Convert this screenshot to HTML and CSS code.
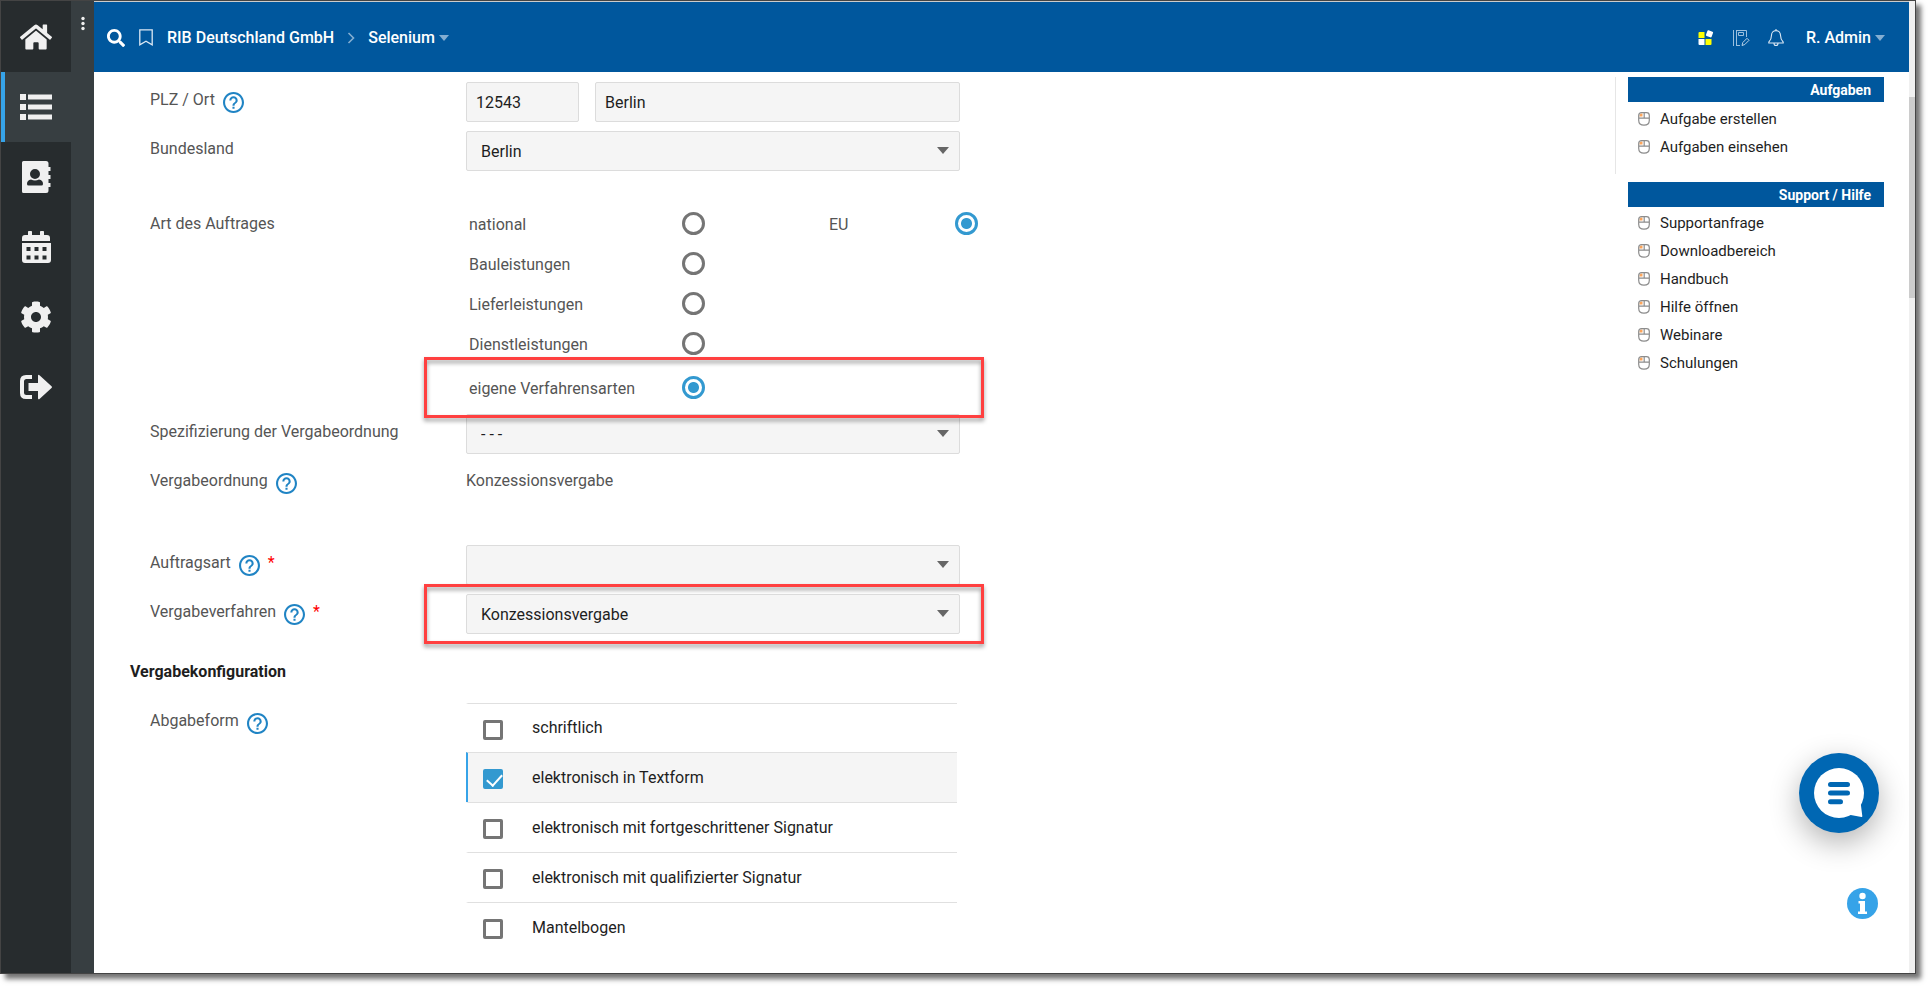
FILE: index.html
```html
<!DOCTYPE html>
<html lang="de">
<head>
<meta charset="utf-8">
<title>Selenium – RIB Deutschland GmbH</title>
<link rel="stylesheet" href="styles.css">
</head>
<body>
<svg class="defs" aria-hidden="true">
  <symbol id="help" viewBox="2 2 20 20"><path d="M11 18h2v-2h-2v2zm1-16C6.480 2 2 6.480 2 12s4.480 10 10 10 10-4.480 10-10S17.520 2 12 2zm0 18c-4.410 0-8-3.590-8-8s3.590-8 8-8 8 3.590 8 8-3.590 8-8 8zm0-14c-2.210 0-4 1.790-4 4h2c0-1.100.9-2 2-2s2 .9 2 2c0 2-3 1.750-3 5h2c0-2.250 3-2.500 3-5 0-2.210-1.790-4-4-4z"/></symbol>
  <symbol id="mouse" viewBox="0 0 12 14"><path d="M1.500 4.500V3.500Q1.500 1.500 3.500 1.500H4.500v3z" fill="#fba55c"/><path d="M3.500.7h5Q11.300.7 11.300 3.500v4.700q0 5-5.300 5t-5.300-5V3.500Q.7.700 3.500.7zM.7 6.200h10.600M6.200.7v5.500" fill="none" stroke="#8c8c8c" stroke-width="1.200"/></symbol>
</svg>
<div class="window">
  <nav class="sidebar">
    <a class="nav-item" href="#" aria-label="Start"><svg class="nav-icon" viewBox="0 0 576 512"><path d="M280.370 148.260L96 300.110V464a16 16 0 0 0 16 16l112.060-.29a16 16 0 0 0 15.920-16V368a16 16 0 0 1 16-16h64a16 16 0 0 1 16 16v95.640a16 16 0 0 0 16 16.050L464 480a16 16 0 0 0 16-16V300L295.670 148.260a12.190 12.190 0 0 0-15.300 0zM571.600 251.470L488 182.560V44.050a12 12 0 0 0-12-12h-56a12 12 0 0 0-12 12v72.610L318.470 43a48 48 0 0 0-61 0L4.340 251.470a12 12 0 0 0-1.600 16.900l25.500 31A12 12 0 0 0 45.150 301l235.220-193.740a12.190 12.190 0 0 1 15.300 0L530.900 301a12 12 0 0 0 16.900-1.600l25.500-31a12 12 0 0 0-1.700-16.930z"/></svg></a>
    <a class="nav-item nav-item--active" href="#" aria-label="Liste"><svg class="nav-icon" viewBox="0 0 32 32"><path d="M0 3h6v6H0zM0 13h6v6H0zM0 23h6v6H0zM8 3.500h24v5H8zM8 13.500h24v5H8zM8 23.500h24v5H8z"/></svg></a>
    <a class="nav-item" href="#" aria-label="Adressbuch"><svg class="nav-icon" viewBox="0 0 32 32"><path fill-rule="evenodd" d="M3.500 0H26q2.500 0 2.500 2.500V6h2v4h-2v4h2v4h-2v4h2v4h-2v3.500Q28.500 32 26 32H3.500Q2 32 2 30.500v-29Q2 0 3.500 0zM15 8a5 5 0 1 0 0 10 5 5 0 0 0 0-10zM11 18.500q-4 .8-4 4.500 0 1.500 1.500 1.500h13q1.500 0 1.500-1.500 0-3.700-4-4.500-4 2-8 0z"/></svg></a>
    <a class="nav-item" href="#" aria-label="Kalender"><svg class="nav-icon" viewBox="0 0 32 32"><path fill-rule="evenodd" d="M2 10V7q0-3 3-3h3V.8Q8 0 8.800 0h2.400q.8 0 .8.800V4h8V.8q0-.8.8-.8h2.400q.8 0 .8.800V4h3q3 0 3 3v3zM2 12h29v17q0 3-3 3H5q-3 0-3-3zm4.500 4v4h4v-4zm8 0v4h4v-4zm8 0v4h4v-4zm-16 8.500v4h4v-4zm8 0v4h4v-4zm8 0v4h4v-4z"/></svg></a>
    <a class="nav-item" href="#" aria-label="Einstellungen"><svg class="nav-icon" viewBox="0 0 512 512"><path d="M487.400 315.700l-42.600-24.600c4.300-23.200 4.300-47 0-70.200l42.600-24.600c4.900-2.800 7.100-8.600 5.500-14-11.100-35.600-30-67.800-54.700-94.600-3.800-4.100-10-5.100-14.800-2.300L380.800 110c-17.900-15.400-38.500-27.300-60.800-35.100V25.800c0-5.600-3.900-10.500-9.400-11.700-36.700-8.200-74.300-7.800-109.200 0-5.500 1.200-9.400 6.100-9.400 11.700V75c-22.200 7.900-42.800 19.800-60.800 35.100L88.700 85.500c-4.900-2.800-11-1.900-14.800 2.300-24.700 26.700-43.600 58.900-54.700 94.600-1.700 5.400.6 11.200 5.500 14L67.300 221c-4.300 23.200-4.300 47 0 70.200l-42.600 24.600c-4.900 2.800-7.100 8.600-5.500 14 11.100 35.600 30 67.800 54.700 94.600 3.800 4.100 10 5.100 14.800 2.300l42.600-24.600c17.900 15.400 38.500 27.300 60.800 35.100v49.200c0 5.600 3.900 10.500 9.400 11.700 36.700 8.200 74.300 7.800 109.200 0 5.500-1.200 9.400-6.100 9.400-11.700v-49.200c22.200-7.900 42.800-19.800 60.800-35.100l42.600 24.600c4.900 2.800 11 1.900 14.800-2.300 24.700-26.700 43.600-58.900 54.700-94.600 1.500-5.500-.7-11.300-5.600-14.100zM256 336c-44.100 0-80-35.900-80-80s35.900-80 80-80 80 35.900 80 80-35.900 80-80 80z"/></svg></a>
    <a class="nav-item" href="#" aria-label="Abmelden"><svg class="nav-icon" viewBox="0 0 32 32"><path d="M12 4v4H6.500Q4 8 4 10.500v11Q4 24 6.500 24H12v4H6q-6 0-6-6V10q0-6 6-6zM8.500 12H18V5q0-2 1.500-.7l12 11q1 .8 0 1.600l-12 11Q18 29 18 27v-7H8.500z"/></svg></a>
  </nav>
  <div class="rail">
    <button class="rail-menu" type="button" aria-label="Menü"><svg viewBox="0 0 4 16" width="4" height="16"><circle cx="2" cy="2.500" r="1.700"/><circle cx="2" cy="7.500" r="1.700"/><circle cx="2" cy="12.500" r="1.700"/></svg></button>
  </div>
  <div class="page">
    <header class="topbar">
      <button class="icon-button" type="button" aria-label="Suche"><svg width="18" height="18" viewBox="0 0 512 512"><path fill="#fff" d="M505 442.700L405.300 343c-4.500-4.500-10.600-7-17-7H372c27.600-35.300 44-79.700 44-128C416 93.100 322.900 0 208 0S0 93.100 0 208s93.100 208 208 208c48.300 0 92.700-16.400 128-44v16.300c0 6.400 2.500 12.500 7 17l99.700 99.700c9.400 9.400 24.600 9.400 33.900 0l28.300-28.300c9.400-9.400 9.400-24.600.1-34zM208 336c-70.700 0-128-57.200-128-128 0-70.700 57.200-128 128-128 70.700 0 128 57.200 128 128 0 70.700-57.200 128-128 128z"/></svg></button>
      <button class="icon-button" type="button" aria-label="Lesezeichen"><svg width="14" height="17" viewBox="0 0 14 17"><path d="M.8.800h12.400v15L7 12.200.8 15.800z" fill="none" stroke="#dbe8f4" stroke-width="1.300"/></svg></button>
      <nav class="crumbs">
        <a class="crumb" href="#">RIB Deutschland GmbH</a>
        <svg width="8" height="12" viewBox="0 0 8 12"><path d="M1.500 1l5 5-5 5" fill="none" stroke="#84aed2" stroke-width="1.600"/></svg>
        <a class="crumb crumb--menu" href="#">Selenium</a>
      </nav>
      <div class="tools">
        <button class="icon-button" type="button" aria-label="Apps"><svg width="16" height="16" viewBox="0 0 16 16"><path d="M.5 3q0-1 1-1h5v6h-6z" fill="#ff0"/><path d="M.5 9h6v6h-5q-1 0-1-1z" fill="#fff"/><path d="M7.500 9h6v5q0 1-1 1h-5z" fill="#ff0"/><rect x="8.500" y=".8" width="6" height="6" rx="1" transform="rotate(20 11.500 3.800)" fill="#fff"/></svg></button>
        <button class="icon-button" type="button" aria-label="Notizen"><svg width="18" height="18" viewBox="0 0 18 18"><path d="M1.500 1v16M4.500 17V1M4 1.500h10.500V8M4 16.500h4M6.500 3.500h5v3h-5z" fill="none" stroke="#9cc0de" stroke-width="1"/><path d="M10 16.500l.8-3 4.200-4.200 2 2-4.200 4.200z" fill="none" stroke="#b9d2e8" stroke-width="1"/></svg></button>
        <button class="icon-button" type="button" aria-label="Meldungen"><svg width="16" height="18" viewBox="0 0 16 18"><path d="M8 1.600c-3 0-4.500 2.200-4.500 4.700 0 4-1.300 5.200-2.700 6.700v1h14.400v-1c-1.400-1.500-2.700-2.700-2.700-6.700 0-2.500-1.500-4.700-4.500-4.700zM8 0v1.600M6 14.200q0 2.300 2 2.300t2-2.300" fill="none" stroke="#dbe8f4" stroke-width="1.100"/></svg></button>
        <button class="user" type="button">R. Admin</button>
      </div>
    </header>
    <div class="content">
      <form class="form">
        <div class="row">
          <div class="label"><label for="plz">PLZ / Ort</label><button class="help" type="button" aria-label="Hilfe"><svg><use href="#help"/></svg></button></div>
          <div class="field place"><input class="input" id="plz" value="12543"><input class="input" aria-label="Ort" value="Berlin"></div>
        </div>
        <div class="row">
          <div class="label"><label for="land">Bundesland</label></div>
          <div class="field select"><select id="land"><option>Berlin</option></select></div>
        </div>
        <div class="row row--art">
          <div class="label">Art des Auftrages</div>
          <div class="choices">
            <div class="choice">
              <label for="national">national</label><input class="radio" type="radio" name="region" id="national">
              <label class="second" for="eu">EU</label><input class="radio" type="radio" name="region" id="eu" checked>
            </div>
            <div class="choice"><label for="bau">Bauleistungen</label><input class="radio" type="radio" name="art" id="bau"></div>
            <div class="choice"><label for="liefer">Lieferleistungen</label><input class="radio" type="radio" name="art" id="liefer"></div>
            <div class="choice"><label for="dienst">Dienstleistungen</label><input class="radio" type="radio" name="art" id="dienst"></div>
            <div class="choice choice--own"><label for="eigene">eigene Verfahrensarten</label><input class="radio" type="radio" name="art" id="eigene" checked><span class="marker marker--choice"></span></div>
          </div>
        </div>
        <div class="row">
          <div class="label"><label for="spez">Spezifizierung der Vergabeordnung</label></div>
          <div class="field select"><select id="spez"><option>- - -</option></select></div>
        </div>
        <div class="row row--value">
          <div class="label">Vergabeordnung<button class="help" type="button" aria-label="Hilfe"><svg><use href="#help"/></svg></button></div>
          <div class="value">Konzessionsvergabe</div>
        </div>
        <div class="row">
          <div class="label"><label for="auftragsart">Auftragsart</label><button class="help" type="button" aria-label="Hilfe"><svg><use href="#help"/></svg></button><span class="required">*</span></div>
          <div class="field select"><select id="auftragsart"><option></option></select></div>
        </div>
        <div class="row">
          <div class="label"><label for="verfahren">Vergabeverfahren</label><button class="help" type="button" aria-label="Hilfe"><svg><use href="#help"/></svg></button><span class="required">*</span></div>
          <div class="field select"><select id="verfahren"><option>Konzessionsvergabe</option></select><span class="marker marker--select"></span></div>
        </div>
        <h2 class="section">Vergabekonfiguration</h2>
        <div class="row">
          <div class="label">Abgabeform<button class="help" type="button" aria-label="Hilfe"><svg><use href="#help"/></svg></button></div>
          <div class="options">
            <label class="option"><input class="check" type="checkbox">schriftlich</label>
            <label class="option option--on"><input class="check" type="checkbox" checked>elektronisch in Textform</label>
            <label class="option"><input class="check" type="checkbox">elektronisch mit fortgeschrittener Signatur</label>
            <label class="option"><input class="check" type="checkbox">elektronisch mit qualifizierter Signatur</label>
            <label class="option"><input class="check" type="checkbox">Mantelbogen</label>
          </div>
        </div>
      </form>
      <aside class="side">
        <section class="panel">
          <h3 class="panel-title">Aufgaben</h3>
          <a class="panel-link" href="#"><svg><use href="#mouse"/></svg>Aufgabe erstellen</a>
          <a class="panel-link" href="#"><svg><use href="#mouse"/></svg>Aufgaben einsehen</a>
        </section>
        <section class="panel">
          <h3 class="panel-title">Support / Hilfe</h3>
          <a class="panel-link" href="#"><svg><use href="#mouse"/></svg>Supportanfrage</a>
          <a class="panel-link" href="#"><svg><use href="#mouse"/></svg>Downloadbereich</a>
          <a class="panel-link" href="#"><svg><use href="#mouse"/></svg>Handbuch</a>
          <a class="panel-link" href="#"><svg><use href="#mouse"/></svg>Hilfe öffnen</a>
          <a class="panel-link" href="#"><svg><use href="#mouse"/></svg>Webinare</a>
          <a class="panel-link" href="#"><svg><use href="#mouse"/></svg>Schulungen</a>
        </section>
      </aside>
    </div>
    <button class="chat" type="button" aria-label="Chat"><svg width="50" height="50" viewBox="0 0 50 50"><circle cx="25" cy="25" r="25" fill="#fff"/><path d="M34 46.500l13.500 2.400q1 .1.800-.9L46.800 36z" fill="#fff"/><path d="M16.500 16.500h17M16.500 25h17M16.500 33.700h10" stroke="#0067b3" stroke-width="5" stroke-linecap="round"/></svg></button>
    <button class="info" type="button" aria-label="Info"><svg width="31" height="31" viewBox="0 0 31 31"><circle cx="15.500" cy="15.500" r="15.500" fill="#36a3e8"/><circle cx="15.500" cy="8" r="3.200" fill="#fff"/><path d="M11.500 13H18v10.500h2V26h-9v-2.500h2v-8h-1.500z" fill="#fff"/></svg></button>
  </div>
  <div class="scrollbar"><div class="thumb"></div></div>
</div>
</body>
</html>
```
FILE: styles.css
```css
* {
  box-sizing: border-box;
}

body {
  margin: 0;
  height: 100vh;
  padding: 0 15px 15px 0;
  background: #fff;
  color: #1e1e1e;
  font: 16px/20px Roboto, "Liberation Sans", sans-serif;
}

button,
input,
select {
  font: inherit;
  color: inherit;
}

button {
  padding: 0;
  border: 0;
  background: none;
  cursor: pointer;
}

a {
  color: inherit;
  text-decoration: none;
}

svg {
  display: block;
}

.defs {
  position: absolute;
  width: 0;
  height: 0;
}

.window {
  display: flex;
  height: 100%;
  border: 1px solid #444;
  box-shadow: 5px 5px 5px rgba(0, 0, 0, 0.55);
  background: #fff;
}

/* Navigation */

.sidebar {
  flex: none;
  width: 70px;
  padding-top: 1px;
  background: #272c2e;
}

.nav-item {
  display: flex;
  align-items: center;
  justify-content: center;
  height: 70px;
  border-left: 4px solid transparent;
  padding-right: 4px;
}

.nav-item--active {
  border-left-color: #36a3e8;
  background: #373e41;
}

.nav-icon {
  width: 32px;
  height: 32px;
  fill: #f0f0f0;
}

.rail {
  flex: none;
  width: 23px;
  padding: 15px 0 0 10px;
  background: #373e41;
}

.rail-menu {
  fill: #f0f0f0;
}

.page {
  position: relative;
  flex: 1;
  min-width: 0;
  display: flex;
  flex-direction: column;
  border-top: 1px solid #ccc;
}

/* Header */

.topbar {
  flex: none;
  display: flex;
  align-items: center;
  gap: 14px;
  height: 70px;
  padding: 1px 24px 0 13px;
  background: #00579d;
  color: #fff;
  font-weight: 500;
}

.crumbs {
  display: flex;
  align-items: center;
  gap: 13px;
}

.crumb--menu::after,
.user::after {
  content: "";
  display: inline-block;
  margin-left: 4px;
  border: 5px solid transparent;
  border-top: 6px solid #84aed2;
  border-bottom: 0;
  vertical-align: 2px;
}

.tools {
  display: flex;
  align-items: center;
  gap: 18px;
  margin-left: auto;
}

.user {
  margin-left: 4px;
  font-weight: 500;
}

/* Form */

.content {
  flex: 1;
  min-height: 0;
  display: flex;
  justify-content: space-between;
  gap: 24px;
  overflow: hidden;
}

.form {
  flex: 0 1 900px;
  min-width: 0;
  padding: 10px 0 0 56px;
  color: #555;
}

.row {
  display: grid;
  grid-template-columns: 316px minmax(0, 1fr);
  margin-bottom: 9px;
}

.row--art {
  margin: 32px 0 3px;
}

.row--value {
  margin-bottom: 46px;
}

.label {
  display: flex;
  align-items: center;
  height: 36px;
}

.row--art .label {
  height: 42px;
}

.value {
  line-height: 36px;
}

.help {
  margin: 4px 0 0 8px;
}

.help svg {
  width: 21px;
  height: 21px;
  fill: #2084c4;
}

.required {
  margin-left: 8px;
  color: #f00;
}

.field {
  position: relative;
  max-width: 494px;
}

.place {
  display: grid;
  grid-template-columns: 113px minmax(0, 1fr);
  gap: 16px;
}

.input,
.select select {
  width: 100%;
  height: 40px;
  padding: 0 9px;
  border: 1px solid #dcdcdc;
  border-radius: 2px;
  background: #f5f5f5;
  color: #1e1e1e;
}

.select select {
  display: block;
  appearance: none;
  padding: 1px 14px 0;
}

.select::after {
  content: "";
  position: absolute;
  top: 16px;
  right: 11px;
  border: 6px solid transparent;
  border-top: 7px solid #666;
  border-bottom: 0;
  pointer-events: none;
}

.choice {
  position: relative;
  display: grid;
  grid-template-columns: 213px 23px 124px 126px 23px;
  align-items: center;
  height: 40px;
  padding-left: 3px;
}

.choice label {
  padding-top: 3px;
}

.choice--own {
  height: 48px;
}

.choice .second {
  grid-column: 4;
}

.radio,
.check {
  appearance: none;
  margin: 0;
  border: 3px solid #757575;
  background: #fff;
}

.radio {
  width: 23px;
  height: 23px;
  border-radius: 50%;
}

.radio:checked {
  border-color: #3399d0;
  background: radial-gradient(circle, #3399d0 5px, #fff 6px);
}

.marker {
  position: absolute;
  z-index: 1;
  border: 3px solid #ff4040;
  filter: drop-shadow(0 3px 2px rgba(0, 0, 0, 0.4));
  pointer-events: none;
}

.marker--choice {
  inset: -6px auto -7px -42px;
  width: 560px;
}

.marker--select {
  inset: -10px -24px -10px -42px;
}

.section {
  margin: 27px 0 21px -20px;
  font-size: 16px;
  line-height: 21px;
  font-weight: 700;
  color: #1e1e1e;
}

.options {
  max-width: 491px;
  color: #1e1e1e;
}

.option {
  display: flex;
  align-items: center;
  gap: 29px;
  height: 50px;
  padding-left: 15px;
  border-top: 1px solid #e0e0e0;
  border-left: 2px solid transparent;
}

.option:first-child {
  height: 49px;
}

.option--on {
  border-left-color: #36a3e8;
  background: #f5f5f5;
}

.check {
  width: 20px;
  height: 20px;
  margin-top: 3px;
  border-radius: 2px;
}

.check:checked {
  display: flex;
  border-color: #3399d0;
  background: #3399d0;
}

.check:checked::after {
  content: "";
  width: 7px;
  height: 13px;
  margin: -1px 0 0 4px;
  border: solid #fff;
  border-width: 0 2px 2px 0;
  rotate: 42deg;
}

/* Side panels */

.side {
  flex: none;
  width: 294px;
  padding: 5px 25px 0 0;
  font-size: 15px;
}

.panel {
  padding-left: 12px;
  margin-bottom: 8px;
  border-left: 1px solid transparent;
}

.panel:first-child {
  padding-bottom: 13px;
  border-left-color: #e6e6e6;
}

.panel-title {
  margin: 0 0 2px;
  padding: 1px 13px 0 0;
  background: #00579d;
  color: #fff;
  font-size: 14px;
  line-height: 24px;
  font-weight: 700;
  text-align: right;
}

.panel:first-child .panel-title {
  margin-bottom: 3px;
}

.panel-link {
  display: flex;
  align-items: center;
  gap: 10px;
  height: 28px;
  padding-left: 10px;
}

.panel-link svg {
  width: 12px;
  height: 14px;
}

/* Floating buttons */

.chat,
.info {
  position: absolute;
  border-radius: 50%;
}

.chat {
  right: 30px;
  bottom: 140px;
  display: grid;
  place-items: center;
  width: 80px;
  height: 80px;
  background: #0067b3;
  box-shadow: 0 10px 30px rgba(0, 0, 0, 0.3);
}

.info {
  right: 31px;
  bottom: 54px;
}

.scrollbar {
  flex: none;
  width: 6px;
  padding-top: 96px;
  background: #f0f0f0;
}

.thumb {
  height: 23%;
  background: #ccc;
}
```
